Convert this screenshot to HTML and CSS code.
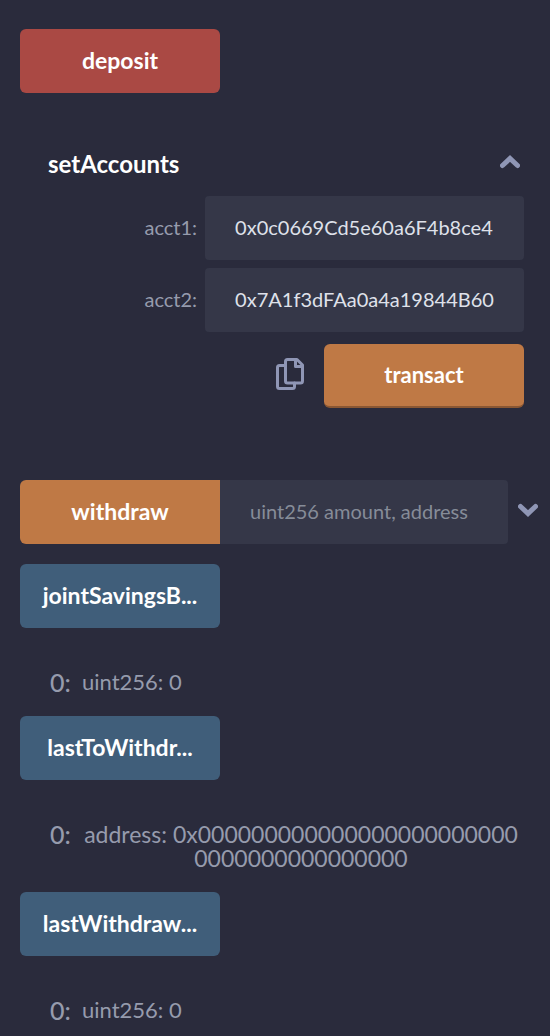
FILE: index.html
```
<!DOCTYPE html>
<html lang="en">
<head>
<meta charset="utf-8">
<meta name="viewport" content="width=device-width, initial-scale=1">
<title>Deployed contract</title>
<link rel="stylesheet" href="styles.css">
</head>
<body>
<main class="contract">
  <button class="btn btn-danger" type="button">deposit</button>

  <section class="method">
    <header class="method-header">
      <h2 class="method-title">setAccounts</h2>
      <button class="icon-btn" type="button" aria-label="Collapse">
        <svg class="chevron" viewBox="0 0 20 14"><path d="M2.500 10.500 10 3.500l7.500 7"/></svg>
      </button>
    </header>
    <div class="field">
      <label class="field-label" for="acct1">acct1:</label>
      <input class="input" id="acct1" type="text" value="0x0c0669Cd5e60a6F4b8ce4">
    </div>
    <div class="field">
      <label class="field-label" for="acct2">acct2:</label>
      <input class="input" id="acct2" type="text" value="0x7A1f3dFAa0a4a19844B60">
    </div>
    <div class="actions">
      <button class="icon-btn" type="button" aria-label="Copy">
        <svg class="copy" viewBox="0 0 28 32">
          <path d="M9.500 7.500h-6a2 2 0 0 0-2 2v19a2 2 0 0 0 2 2h13a2 2 0 0 0 2-2v-3.500"/>
          <path d="M11.500 1.500h9.500l5.500 5.500v16a2 2 0 0 1-2 2h-13a2 2 0 0 1-2-2v-19.500a2 2 0 0 1 2-2z"/>
          <path d="M19.500 2v6.500h7"/>
        </svg>
      </button>
      <button class="btn btn-warning btn-raised" type="button">transact</button>
    </div>
  </section>

  <div class="inline-call">
    <button class="btn btn-warning btn-joined" type="button">withdraw</button>
    <input class="input" type="text" aria-label="withdraw arguments" placeholder="uint256 amount, address">
    <button class="icon-btn" type="button" aria-label="Expand">
      <svg class="chevron" viewBox="0 0 20 14"><path d="M2.500 3.500 10 10.500l7.500-7"/></svg>
    </button>
  </div>

  <section class="call">
    <button class="btn btn-info" type="button">jointSavingsB...</button>
    <div class="result"><span class="index">0:</span><span class="value">uint256: 0</span></div>
  </section>
  <section class="call">
    <button class="btn btn-info" type="button">lastToWithdr...</button>
    <div class="result"><span class="index">0:</span><span class="value value-address">address: 0x0000000000000000000000000000000000000000</span></div>
  </section>
  <section class="call">
    <button class="btn btn-info" type="button">lastWithdraw...</button>
    <div class="result"><span class="index">0:</span><span class="value">uint256: 0</span></div>
  </section>
</main>
</body>
</html>
```
FILE: styles.css
```
* { box-sizing: border-box; }
body {
  margin: 0;
  background: #2a2b3c;
  color: #969bad;
  font-family: Lato, "Noto Sans", sans-serif;
  font-size: 22px;
  line-height: 24px;
}
.contract {
  display: flex;
  flex-direction: column;
  padding: 29px 0 0 20px;
}
.btn {
  flex: none;
  width: 200px;
  height: 64px;
  padding: 0 0 2px;
  border: 0;
  border-radius: 6px;
  color: #fff;
  font: inherit;
  font-size: 23px;
  font-weight: 700;
}
.btn-danger { background: #aa4944; }
.btn-warning { background: #bf7945; }
.btn-info { background: #405e7a; }
.btn-raised {
  padding: 0;
  border-bottom: 2px solid #8a5733;
  font-size: 22px;
}
.btn-joined { border-radius: 6px 0 0 6px; }
.method { padding: 55px 26px 0 28px; }
.method-header {
  display: flex;
  align-items: center;
  justify-content: space-between;
  height: 32px;
  margin-bottom: 16px;
}
.method-title {
  margin: 0;
  color: #fff;
  font-size: 24px;
  font-weight: 700;
}
.icon-btn {
  display: flex;
  flex: none;
  padding: 0;
  border: 0;
  background: none;
  color: #8f96b5;
}
.method-header .icon-btn { margin: 0 4px 4px 0; }
.chevron, .copy { fill: none; stroke: currentColor; stroke-linecap: round; }
.chevron { width: 20px; height: 14px; stroke-width: 5; }
.copy { width: 28px; height: 32px; stroke-width: 3; stroke-linejoin: round; }
.field {
  display: flex;
  align-items: center;
  gap: 8px;
  margin-bottom: 8px;
}
.field-label {
  flex: 1;
  padding-bottom: 2px;
  text-align: right;
  font-size: 20px;
}
.field .input { flex: 0 0 67%; }
.input {
  min-width: 0;
  height: 64px;
  padding: 0 30px 2px;
  border: 0;
  border-radius: 4px;
  background: #353748;
  color: #dfe1ea;
  font: inherit;
  font-size: 20px;
}
.input::placeholder { color: #868c98; opacity: 1; }
.actions {
  display: flex;
  align-items: center;
  justify-content: flex-end;
  gap: 20px;
  padding-top: 4px;
}
.actions .icon-btn { padding-bottom: 4px; }
.inline-call {
  display: flex;
  align-items: center;
  margin: 72px 12px 20px 0;
}
.inline-call .input { flex: 1; border-radius: 0 4px 4px 0; }
.inline-call .icon-btn { margin: 0 0 4px 10px; }
.result {
  display: flex;
  padding: 42px 30px 22px;
}
.index {
  width: 32px;
  font-size: 25px;
  font-weight: 500;
}
.value { font-size: 22px; }
.value-address {
  flex: 1;
  font-size: 23px;
  text-align: center;
  word-break: break-all;
}
```
